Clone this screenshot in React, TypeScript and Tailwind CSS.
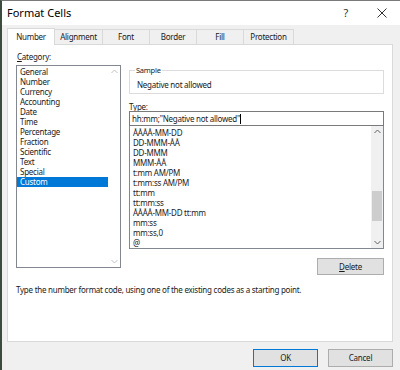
import React from 'react';

const categories = [
  'General', 'Number', 'Currency', 'Accounting', 'Date', 'Time',
  'Percentage', 'Fraction', 'Scientific', 'Text', 'Special', 'Custom',
];

const formats = [
  'ÅÅÅÅ-MM-DD', 'DD-MMM-ÅÅ', 'DD-MMM', 'MMM-ÅÅ', 't:mm AM/PM', 't:mm:ss AM/PM',
  'tt:mm', 'tt:mm:ss', 'ÅÅÅÅ-MM-DD tt:mm', 'mm:ss', 'mm:ss,0', '@',
];

const tabs = ['Number', 'Alignment', 'Font', 'Border', 'Fill', 'Protection'];
const tabWidths = ['w-[48px]', 'w-[49px]', 'w-[48px]', 'w-[48px]', 'w-[48px]', 'w-[51px]'];

function UpArrow({ className }: { className?: string }) {
  return (
    <svg width="7" height="5" viewBox="0 0 7 5" className={className}>
      <path d="M0.5 4 L3.5 1 L6.5 4" fill="none" stroke="currentColor" strokeWidth="1" />
    </svg>
  );
}

function DownArrow({ className }: { className?: string }) {
  return (
    <svg width="7" height="5" viewBox="0 0 7 5" className={className}>
      <path d="M0.5 1 L3.5 4 L6.5 1" fill="none" stroke="currentColor" strokeWidth="1" />
    </svg>
  );
}

export default function App() {
  return (
    <div
      className="w-[400px] h-[370px] overflow-hidden bg-[#f0f0f0] text-[#1a1a1a] border-l-2 border-l-[#3c4a40] border-t border-t-[#7a7a7a] flex flex-col tracking-[-0.25px]"
      style={{ fontFamily: '"Noto Sans", "Open Sans", sans-serif' }}
    >
      {/* Title bar */}
      <div className="h-[24px] bg-white flex items-center shrink-0">
        <span className="pl-[5px] text-[11px] tracking-normal text-black">Format Cells</span>
        <span className="ml-auto mr-[29px] text-[11px] text-[#333]">?</span>
        <svg width="10" height="10" viewBox="0 0 10 10" className="mr-[13px] text-[#333]">
          <path d="M0.5 0.5 L9.5 9.5 M9.5 0.5 L0.5 9.5" stroke="currentColor" strokeWidth="1" />
        </svg>
      </div>

      {/* Tabs */}
      <div className="flex items-end pl-[5px] mt-[2px] h-[17px] shrink-0">
        {tabs.map((t, i) =>
          i === 0 ? (
            <div
              key={t}
              className={`${tabWidths[i]} h-[17px] bg-white border border-[#d9d9d9] border-b-0 flex items-center justify-center text-[8px] relative z-10 -mb-px`}
            >
              {t}
            </div>
          ) : (
            <div
              key={t}
              className={`${tabWidths[i]} h-[15px] bg-[#f0f0f0] border border-[#d9d9d9] border-b-0 -ml-px flex items-center justify-center text-[8px]`}
            >
              {t}
            </div>
          )
        )}
      </div>

      {/* Panel */}
      <div className="ml-[5px] w-[386px] h-[298px] bg-white border border-[#d9d9d9] shrink-0 px-[8px] pt-[6px]">
        <div className="flex gap-[8px]">
          {/* Category column */}
          <div className="w-[105px] shrink-0">
            <div className="text-[8px] leading-[12px] pl-px">
              <span className="underline">C</span>ategory:
            </div>
            <div className="mt-[2px] h-[203px] border border-[#828790] flex">
              <div className="flex-1 pt-[1px]">
                {categories.map((c) => (
                  <div
                    key={c}
                    className={`h-[10px] leading-[10px] text-[8px] pl-[3px] ${
                      c === 'Custom' ? 'bg-[#0078d7] text-white' : ''
                    }`}
                  >
                    {c}
                  </div>
                ))}
              </div>
              <div className="w-[12px] flex flex-col items-center justify-between py-[3px] text-[#c2c2c2]">
                <UpArrow />
                <DownArrow />
              </div>
            </div>
          </div>

          {/* Right column */}
          <div className="flex-1 flex flex-col pt-[19px]">
            <div className="relative h-[24px] border border-[#dcdcdc]">
              <span className="absolute -top-[6px] left-[5px] bg-white px-px text-[7.5px] leading-[10px]">Sample</span>
              <div className="pt-[8px] pl-[7px] text-[8px] leading-[12px]">Negative not allowed</div>
            </div>
            <div className="mt-[8px] text-[8px] leading-[10px]">
              <span className="underline">T</span>ype:
            </div>
            <div className="-mt-px h-[15px] border border-[#7a7a7a] flex items-center pl-[2px] text-[8px]">
              hh:mm;"Negative not allowed"<span className="inline-block w-px h-[10px] bg-black" />
            </div>
            <div className="h-[123px] border border-[#828790] border-t-0 flex">
              <div className="flex-1 pt-[2px]">
                {formats.map((f) => (
                  <div key={f} className="h-[10px] leading-[10px] text-[8px] pl-[3px]">
                    {f}
                  </div>
                ))}
              </div>
              <div className="w-[12px] bg-[#f0f0f0] flex flex-col items-center text-[#606060]">
                <div className="h-[11px] flex items-center">
                  <UpArrow />
                </div>
                <div className="flex-1 w-full flex flex-col pt-[54px] px-px">
                  <div className="h-[30px] bg-[#cdcdcd]" />
                </div>
                <div className="h-[11px] flex items-center">
                  <DownArrow />
                </div>
              </div>
            </div>
            <div className="flex justify-end mt-[9px]">
              <button className="w-[67px] h-[17px] bg-[#e1e1e1] border border-[#adadad] text-[8px] leading-none">
                <span className="underline">D</span>elete
              </button>
            </div>
          </div>
        </div>
        <div className="mt-[9px] text-[8px] leading-[12px]">
          Type the number format code, using one of the existing codes as a starting point.
        </div>
      </div>

      {/* Footer buttons */}
      <div className="flex justify-end gap-[10px] pr-[7px] mt-[7px]">
        <button className="w-[65px] h-[18px] bg-[#e1e1e1] border border-[#0078d7] text-[8px] leading-none">OK</button>
        <button className="w-[65px] h-[18px] bg-[#e1e1e1] border border-[#adadad] text-[8px] leading-none">Cancel</button>
      </div>
    </div>
  );
}
